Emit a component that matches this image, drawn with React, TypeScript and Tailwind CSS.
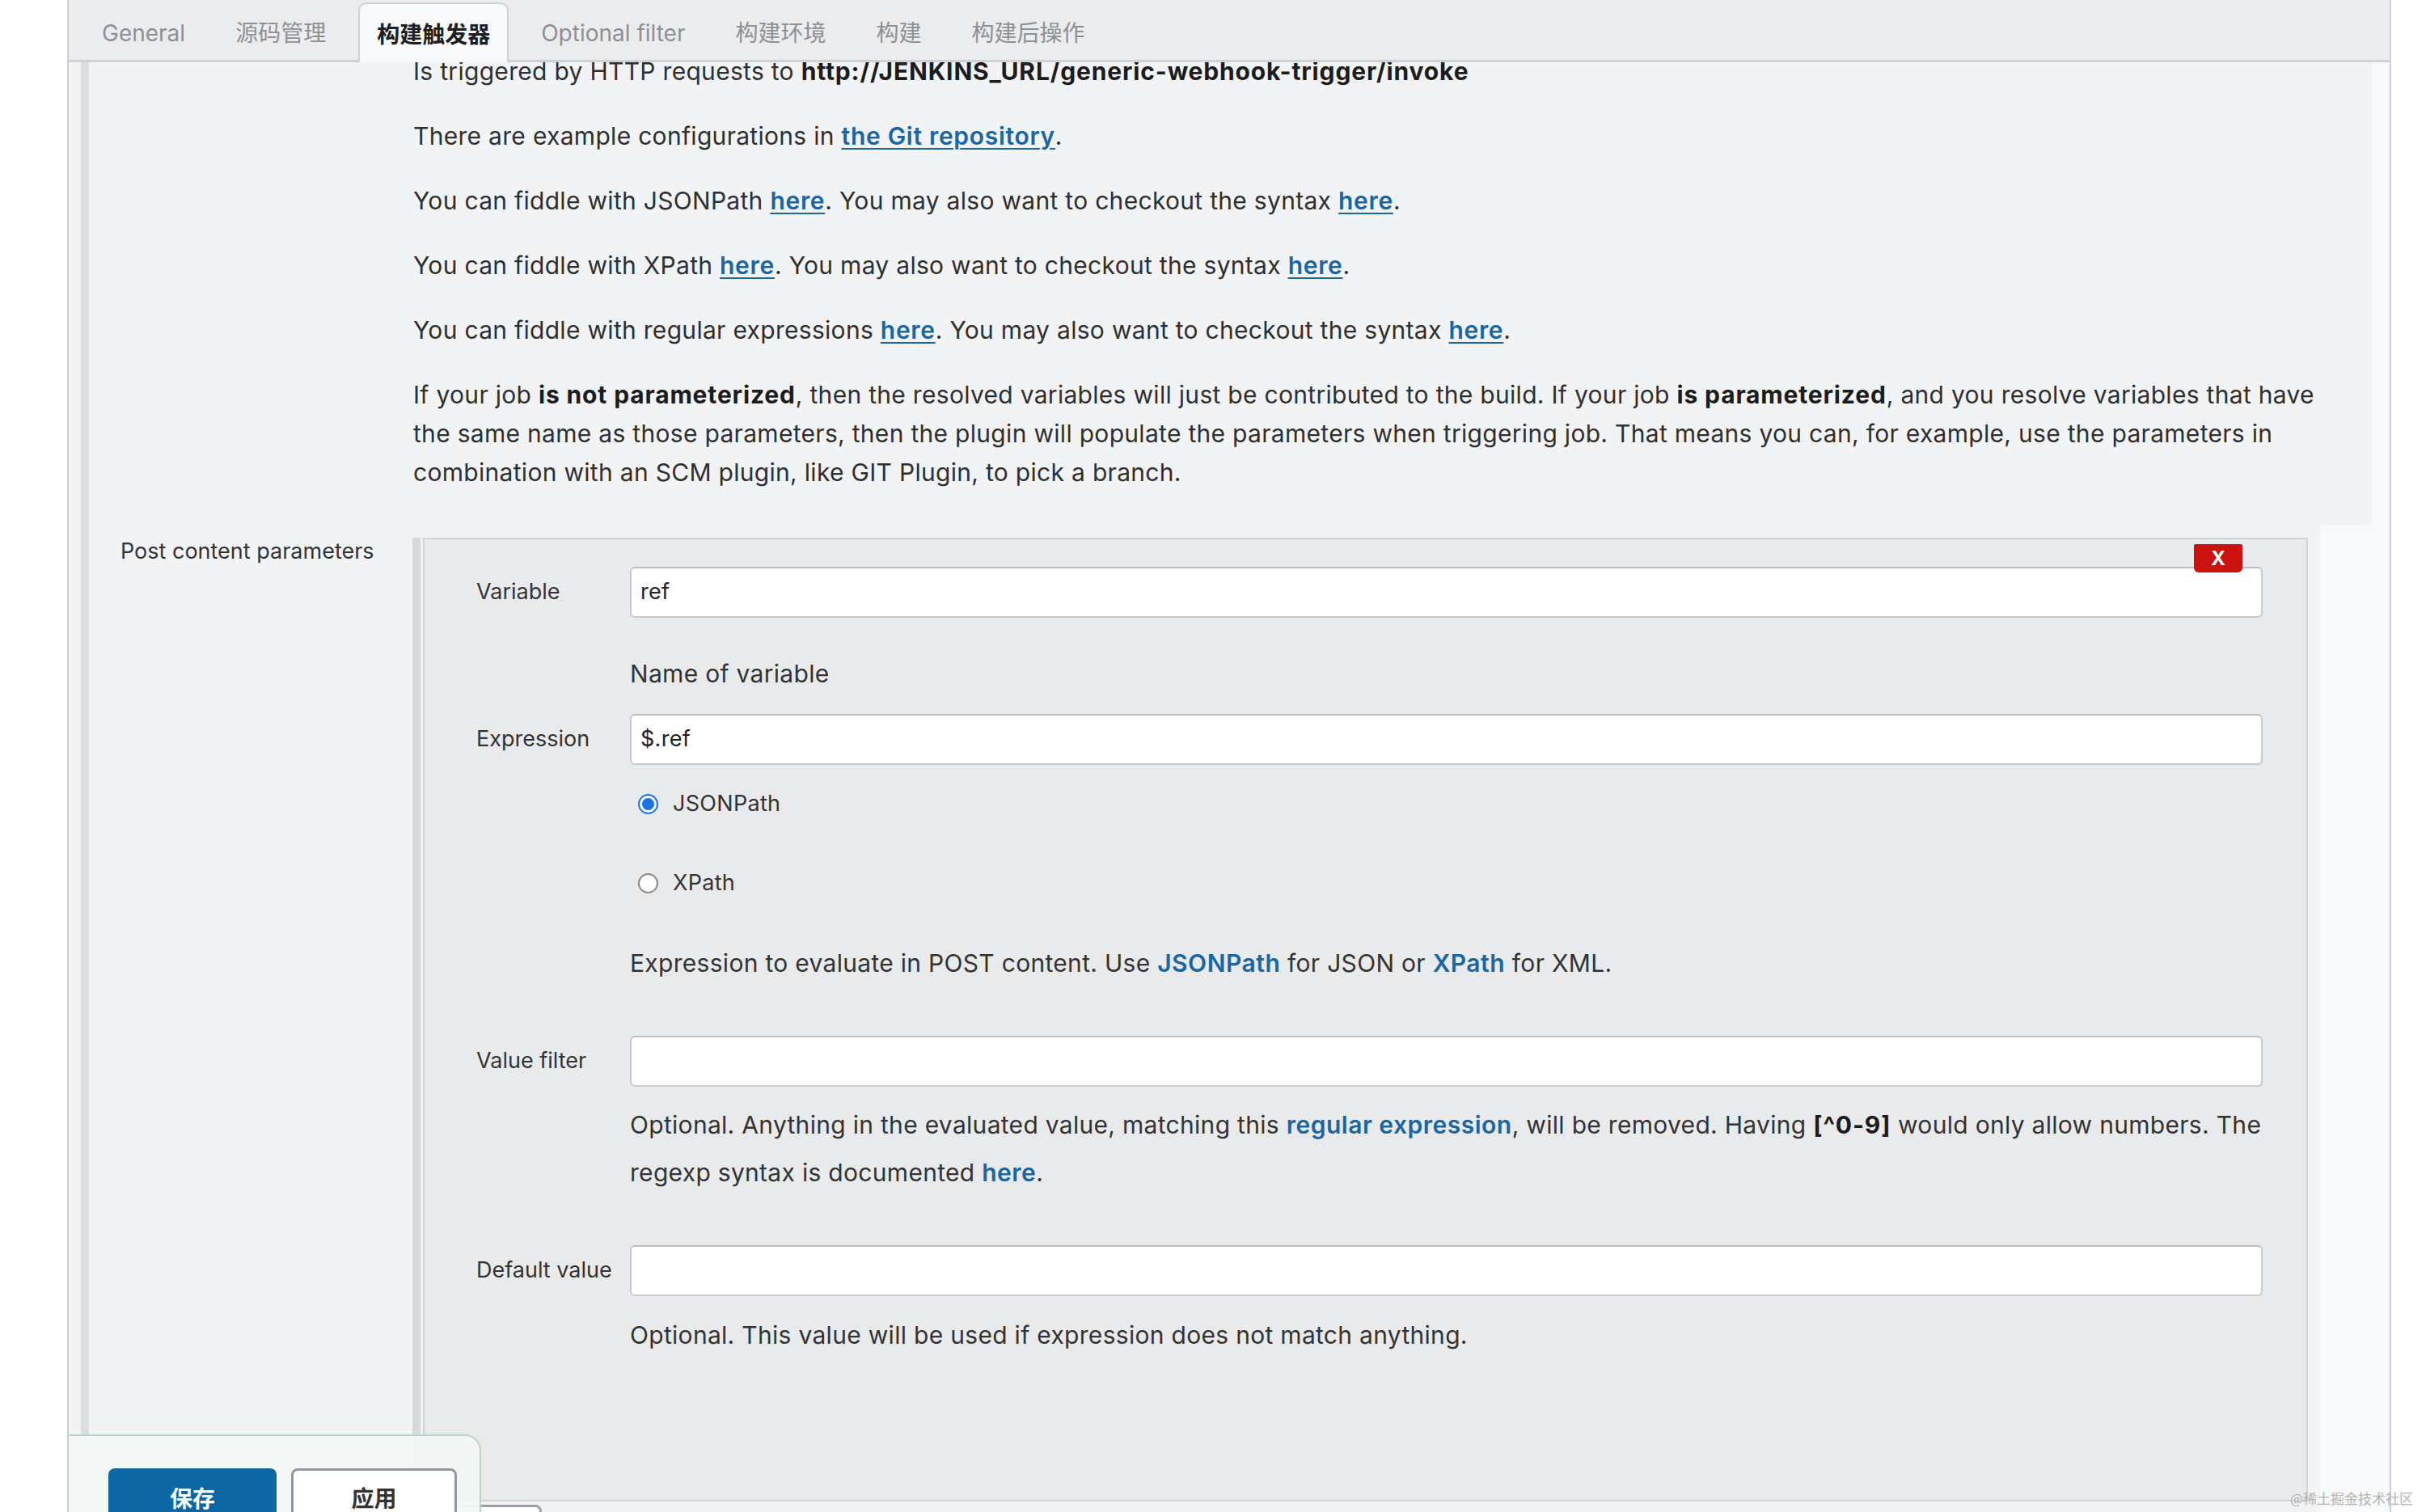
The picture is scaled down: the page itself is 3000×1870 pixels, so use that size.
const linkU = "text-[#1a66a2] font-semibold underline decoration-[2px] underline-offset-[4px] tracking-[0.7px]";
const link = "text-[#1a66a2] font-semibold tracking-[0.5px]";
const bold = "text-[#1c1c1c] font-bold tracking-[0.85px]";

function Tab({ label, active }: { label: string; active?: boolean }) {
  if (active) {
    return (
      <div className="mt-[3px] -mb-[3px] h-[74px] px-[21px] pt-[4px] flex items-center bg-[#f8f9fa] border-2 border-b-0 border-[#d0d1d4] rounded-t-[10px] text-[28px] font-bold text-[#1f1f1f] whitespace-nowrap">
        {label}
      </div>
    );
  }
  return (
    <div className="h-[74px] px-[22px] pt-[8px] flex items-center text-[28px] text-[#8d9095] whitespace-nowrap">
      {label}
    </div>
  );
}

function Input({ value }: { value?: string }) {
  return (
    <div className="flex-1 h-[63px] bg-white border-2 border-[#c9cacd] border-t-[#bdbec1] rounded-[6px] px-[11px] flex items-center text-[27px] text-[#222] tracking-[0.3px]">
      {value}
    </div>
  );
}

function Label({ text }: { text: string }) {
  return (
    <div className="w-[190px] shrink-0 h-[63px] flex items-center text-[27px] text-[#333] whitespace-nowrap">
      {text}
    </div>
  );
}

function Radio({ checked, label }: { checked?: boolean; label: string }) {
  return (
    <div className="h-[48px] flex items-center pl-[10px] gap-[18px]">
      {checked ? (
        <div className="w-[25px] h-[25px] rounded-full border-[2px] border-[#1a73e8] bg-white flex items-center justify-center">
          <div className="w-[15px] h-[15px] rounded-full bg-[#1a73e8]" />
        </div>
      ) : (
        <div className="w-[25px] h-[25px] rounded-full border-[2px] border-[#8a8a8a] bg-white" />
      )}
      <span className="text-[27px] text-[#333] tracking-[0.3px]">{label}</span>
    </div>
  );
}

export default function App() {
  return (
    <div className="relative w-[3000px] h-[1870px] overflow-hidden bg-white font-[Inter,'Noto_Sans_CJK_SC',sans-serif] text-[#333]">
      <div className="ml-[83px] w-[2874px] h-full border-x-2 border-[#cfd0d3] bg-[#f8f9fa] flex flex-col">
        {/* Tab bar */}
        <div className="relative z-10 h-[77px] shrink-0 bg-[#ebecee] border-b-[3px] border-[#d0d1d4] flex pl-[19px] gap-[18px]">
          <Tab label="General" />
          <Tab label="源码管理" />
          <Tab label="构建触发器" active />
          <Tab label="Optional filter" />
          <Tab label="构建环境" />
          <Tab label="构建" />
          <Tab label="构建后操作" />
        </div>

        <div className="flex flex-1 min-h-0">
          <div className="w-[15px] shrink-0 bg-[#f2f3f5]" />
          <div className="w-[10px] shrink-0 bg-[#dcdde0]" />
          <div className="flex-1 min-w-0 flex flex-col">
            {/* Description */}
            <div className="mr-[22px] bg-[#f2f3f5] pl-[401px] pb-[41px] flex flex-col gap-[32px] text-[30px] tracking-[0.3px] leading-[48px] text-[#2f2f2f] whitespace-nowrap">
              <p className="-mt-[13px]">
                Is triggered by HTTP requests to <b className={bold}>http://JENKINS_URL/generic-webhook-trigger/invoke</b>
              </p>
              <p>
                There are example configurations in <span className={linkU}>the Git repository</span>.
              </p>
              <p>
                You can fiddle with JSONPath <span className={linkU}>here</span>. You may also want to checkout the syntax <span className={linkU}>here</span>.
              </p>
              <p>
                You can fiddle with XPath <span className={linkU}>here</span>. You may also want to checkout the syntax <span className={linkU}>here</span>.
              </p>
              <p>
                You can fiddle with regular expressions <span className={linkU}>here</span>. You may also want to checkout the syntax <span className={linkU}>here</span>.
              </p>
              <p>
                If your job <b className={bold}>is not parameterized</b>, then the resolved variables will just be contributed to the build. If your job <b className={bold}>is parameterized</b>, and you resolve variables that have
                <br />
                the same name as those parameters, then the plugin will populate the parameters when triggering job. That means you can, for example, use the parameters in
                <br />
                combination with an SCM plugin, like GIT Plugin, to pick a branch.
              </p>
            </div>

            {/* Post content parameters row */}
            <div className="flex-1 mr-[86px] bg-[#f2f3f5] flex">
              <div className="w-[400px] shrink-0 pl-[39px] pt-[9px] text-[27px] leading-[48px] text-[#333] whitespace-nowrap">
                Post content parameters
              </div>
              <div className="flex-1 min-w-0 flex flex-col pt-[16px] pr-[15px]">
                <div className="flex">
                  <div className="w-[10px] shrink-0 bg-[#d8d9dc]" />
                  <div className="w-[3px] shrink-0" />
                  <div className="relative flex-1 min-w-0 h-[1192px] bg-[#e9eaec] border-2 border-[#d2d3d6] pl-[64px] pr-[54px] pt-[34px] flex flex-col">
                    <div className="absolute right-[79px] top-[6px] w-[60px] h-[35px] bg-[#cc1111] rounded-b-[6px] rounded-t-[2px] flex items-center justify-center text-white font-bold text-[24px] font-[Inter,sans-serif]">
                      X
                    </div>

                    <div className="flex">
                      <Label text="Variable" />
                      <Input value="ref" />
                    </div>
                    <div className="ml-[190px] mt-[45px] text-[30px] tracking-[0.3px] leading-[48px]">Name of variable</div>

                    <div className="flex mt-[26px]">
                      <Label text="Expression" />
                      <Input value="$.ref" />
                    </div>
                    <div className="ml-[190px] mt-[24px]">
                      <Radio checked label="JSONPath" />
                    </div>
                    <div className="ml-[190px] mt-[50px]">
                      <Radio label="XPath" />
                    </div>
                    <div className="ml-[190px] mt-[51px] text-[30px] tracking-[0.3px] leading-[48px] whitespace-nowrap">
                      Expression to evaluate in POST content. Use <span className={link}>JSONPath</span> for JSON or <span className={link}>XPath</span> for XML.
                    </div>

                    <div className="flex mt-[66px]">
                      <Label text="Value filter" />
                      <Input />
                    </div>
                    <div className="ml-[190px] mt-[18px] text-[30px] tracking-[0.3px] leading-[59px] whitespace-nowrap">
                      Optional. Anything in the evaluated value, matching this <span className={link}>regular expression</span>, will be removed. Having <b className={bold}>[^0-9]</b> would only allow numbers. The
                      <br />
                      regexp syntax is documented <span className={link}>here</span>.
                    </div>

                    <div className="flex mt-[60px]">
                      <Label text="Default value" />
                      <Input />
                    </div>
                    <div className="ml-[190px] mt-[24px] text-[30px] tracking-[0.3px] leading-[48px] whitespace-nowrap">
                      Optional. This value will be used if expression does not match anything.
                    </div>
                  </div>
                </div>
                <div className="flex">
                  <div className="w-[10px] shrink-0 bg-[#d8d9dc]" />
                  <div className="ml-[3px] mt-[4px] w-[147px] h-[60px] bg-white border-[3px] border-[#9aa1a6] rounded-[8px]" />
                </div>
              </div>
            </div>
          </div>
        </div>
      </div>

      {/* Floating save bar */}
      <div className="absolute left-[83px] top-[1774px] w-[512px] h-[120px] bg-[#f3f7f4]/95 border-2 border-[#bdd3c9] rounded-tr-[20px] flex items-start pl-[49px] pt-[40px] gap-[18px]">
        <div className="w-[208px] h-[76px] bg-[#0d67a2] rounded-[8px] flex items-center justify-center text-white font-bold text-[28px]">
          保存
        </div>
        <div className="w-[205px] h-[76px] bg-white border-[3px] border-[#8f989e] rounded-[8px] flex items-center justify-center text-[#333] font-semibold text-[28px]">
          应用
        </div>
      </div>

      {/* Watermark */}
      <div className="absolute left-[2832px] top-[1841px] text-[17px] leading-[24px] text-[#b3b3b3] whitespace-nowrap font-['Noto_Sans_CJK_SC',serif]">
        @稀土掘金技术社区
      </div>
    </div>
  );
}
